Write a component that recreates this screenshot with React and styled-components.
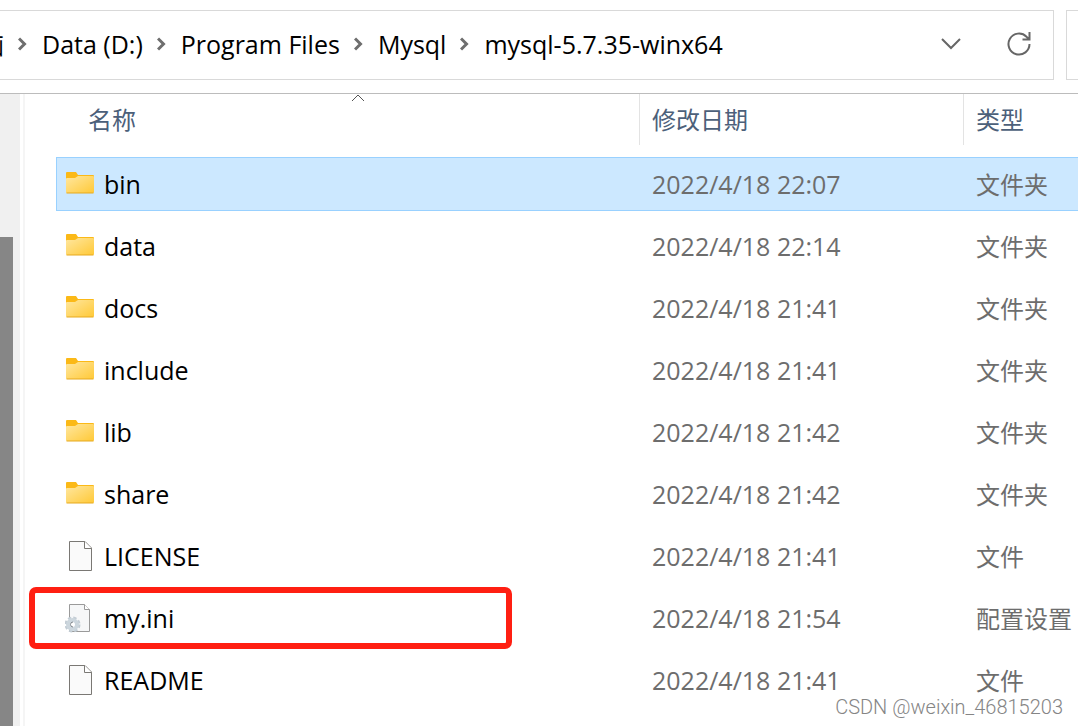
import React from 'react';
import styled, { createGlobalStyle } from 'styled-components';

const files = [
  { name: 'bin', kind: 'folder', date: '2022/4/18 22:07', type: '文件夹', selected: true },
  { name: 'data', kind: 'folder', date: '2022/4/18 22:14', type: '文件夹' },
  { name: 'docs', kind: 'folder', date: '2022/4/18 21:41', type: '文件夹' },
  { name: 'include', kind: 'folder', date: '2022/4/18 21:41', type: '文件夹' },
  { name: 'lib', kind: 'folder', date: '2022/4/18 21:42', type: '文件夹' },
  { name: 'share', kind: 'folder', date: '2022/4/18 21:42', type: '文件夹' },
  { name: 'LICENSE', kind: 'file', date: '2022/4/18 21:41', type: '文件' },
  { name: 'my.ini', kind: 'config', date: '2022/4/18 21:54', type: '配置设置', marked: true },
  { name: 'README', kind: 'file', date: '2022/4/18 21:41', type: '文件' },
];

const path = ['Data (D:)', 'Program Files', 'Mysql', 'mysql-5.7.35-winx64'];

const FolderIcon = () => (
  <svg width="30" height="32" viewBox="0 1 30 32" aria-hidden="true">
    <defs>
      <linearGradient id="folder" x1="0" y1="0" x2="1" y2="1">
        <stop offset="0" stopColor="#ffe7a0" />
        <stop offset="1" stopColor="#ffc937" />
      </linearGradient>
    </defs>
    <path d="M1 6a1 1 0 0 1 1-1h9l2 3h15a1 1 0 0 1 1 1v4H1z" fill="#fbb917" />
    <path
      d="M1 12a1 1 0 0 1 1-1h8l3-2h15a1 1 0 0 1 1 1v15a1 1 0 0 1-1 1H2a1 1 0 0 1-1-1z"
      fill="url(#folder)"
    />
    <path d="M1.500 26h27" fill="none" stroke="#e6a91f" />
  </svg>
);

const FileIcon = () => (
  <svg width="30" height="32" viewBox="0 0 30 32" aria-hidden="true">
    <path d="M4.500 1.500H20l6.500 6.500v22.500h-22z" fill="#fafafa" stroke="#7a7874" />
    <path d="M19.500 1.500V8.500h7" fill="#fff" stroke="#7a7874" />
  </svg>
);

const ConfigIcon = () => (
  <svg width="30" height="32" viewBox="0 0 30 32" aria-hidden="true">
    <path d="M4.500 2.500h15l5 5v22h-20z" fill="#f6f7f8" stroke="#9a9a9a" />
    <path d="M19.500 2.500v5h5" fill="#fff" stroke="#9a9a9a" />
    <circle cx="7.500" cy="22.500" r="6.500" fill="none" stroke="#c2ccd4" strokeWidth="3" strokeDasharray="3.100 2" />
    <circle cx="7.500" cy="22.500" r="4.500" fill="#fff" stroke="#ccd6dd" strokeWidth="4" />
    <path d="M8 20a2.500 2.500 0 0 0 0 5" fill="none" stroke="#7f868c" />
  </svg>
);

const icons = { folder: FolderIcon, file: FileIcon, config: ConfigIcon };

const Separator = () => (
  <svg width="10" height="14" viewBox="0 0 10 14" aria-hidden="true">
    <path d="M1 1.500L6.500 7 1 12.500" fill="none" stroke="#6e6e6e" strokeWidth="3" />
  </svg>
);

const FileRow = ({ file }) => {
  const Icon = icons[file.kind];
  return (
    <Row $selected={file.selected}>
      <NameCell>
        <FileName>
          <Icon />
          {file.name}
        </FileName>
        {file.marked && <Marker />}
      </NameCell>
      <Cell>{file.date}</Cell>
      <TypeCell>{file.type}</TypeCell>
    </Row>
  );
};

const App = () => (
  <>
    <GlobalStyle />
    <Window>
      <Toolbar>
        <AddressBar>
          <Path aria-label="路径">
            <Clipped>
              <Crumb href="#">此电脑</Crumb>
            </Clipped>
            {path.map((part) => (
              <React.Fragment key={part}>
                <Separator />
                <Crumb href="#">{part}</Crumb>
              </React.Fragment>
            ))}
          </Path>
          <IconButton aria-label="历史记录">
            <svg width="22" height="14" viewBox="0 0 22 14">
              <path d="M2 2l9 9 9-9" fill="none" stroke="#666" strokeWidth="2" />
            </svg>
          </IconButton>
          <IconButton aria-label="刷新">
            <svg width="26" height="26" viewBox="0 0 26 26">
              <path
                d="M23.500 13a10.500 10.500 0 1 1-3-7.300L23 8M23.500 1v7.500h-7"
                fill="none"
                stroke="#666"
                strokeWidth="2"
              />
            </svg>
          </IconButton>
        </AddressBar>
        <SearchBox aria-label="搜索" />
      </Toolbar>
      <Body>
        <Sidebar>
          <Thumb />
        </Sidebar>
        <Divider />
        <Main>
          <Table>
            <colgroup>
              <col />
              <DateCol />
              <TypeCol />
            </colgroup>
            <thead>
              <tr>
                <Heading $first>
                  名称
                  <SortMark width="14" height="8" viewBox="0 0 14 8" aria-hidden="true">
                    <path d="M1 7l6-6 6 6" fill="none" stroke="#555" />
                  </SortMark>
                </Heading>
                <Heading>修改日期</Heading>
                <Heading $last>类型</Heading>
              </tr>
            </thead>
            <tbody>
              {files.map((file) => (
                <FileRow key={file.name} file={file} />
              ))}
            </tbody>
          </Table>
        </Main>
      </Body>
      <Watermark>CSDN @weixin_46815203</Watermark>
    </Window>
  </>
);

export default App;

const GlobalStyle = createGlobalStyle`
  * {
    box-sizing: border-box;
  }

  body {
    margin: 0;
    background: #fff;
    color: #000;
    font-family: 'Open Sans', 'Noto Sans CJK SC', sans-serif;
    font-size: 25px;
    line-height: 32px;
  }
`;

const Window = styled.div`
  position: relative;
  display: flex;
  flex-direction: column;
  min-height: 100vh;
  overflow: hidden;
`;

const Toolbar = styled.header`
  display: flex;
  gap: 12px;
  padding: 10px 0 13px;
  border-bottom: 1px solid #bcbcbc;
`;

const AddressBar = styled.div`
  display: flex;
  flex: 1;
  align-items: center;
  gap: 44px;
  height: 70px;
  padding: 0 21px 3px 0;
  border: 1px solid #d9d9d9;
  border-left: 0;
`;

const Path = styled.nav`
  display: flex;
  flex: 1;
  align-items: center;
  gap: 14px;
  white-space: nowrap;
`;

// only the end of the first crumb is in view
const Clipped = styled.span`
  display: flex;
  justify-content: flex-end;
  width: 4px;
  overflow: hidden;
`;

const Crumb = styled.a`
  color: inherit;
  text-decoration: none;
`;

const IconButton = styled.button`
  display: flex;
  padding: 0;
  border: 0;
  background: none;
`;

const SearchBox = styled.input`
  width: 12px;
  height: 70px;
  padding: 0;
  border: 1px solid #d9d9d9;
  border-right: 0;
  background: #fff;
`;

const Body = styled.div`
  display: flex;
  flex: 1;
`;

const Sidebar = styled.div`
  width: 20px;
  padding-top: 143px;
  background: #f0f0f0;
`;

const Thumb = styled.div`
  width: 13px;
  height: 100%;
  background: #868686;
`;

const Divider = styled.div`
  width: 5px;
  border-right: 2px solid #f5f5f5;
`;

const Main = styled.main`
  flex: 1;
  padding-left: 31px;
`;

const Table = styled.table`
  width: 100%;
  table-layout: fixed;
  border-collapse: separate;
  border-spacing: 0 8px;
  margin-top: -8px;
`;

const DateCol = styled.col`
  width: 324px;
`;

const TypeCol = styled.col`
  width: 114px;
`;

const Heading = styled.th`
  position: relative;
  height: 55px;
  padding: 0 0 4px ${(props) => (props.$first ? '32px' : '12px')};
  color: #4c607a;
  font-size: 24px;
  font-weight: 400;
  text-align: left;
  background: ${(props) =>
    props.$last ? 'none' : 'linear-gradient(#e3e3e3, #e3e3e3) right top / 1px 51px no-repeat'};
`;

// sits on the top edge of the sorted column
const SortMark = styled.svg`
  position: absolute;
  top: 0;
  right: 0;
  left: 20px;
  margin: 0 auto;
`;

const Cell = styled.td`
  height: 54px;
  padding: 0 0 0 12px;
  color: #6d6d6d;
  border: 0 solid transparent;
  border-width: 1px 0;
  white-space: nowrap;
`;

const TypeCell = styled(Cell)`
  padding-top: 2px;
  font-size: 24px;
`;

const NameCell = styled(Cell)`
  position: relative;
  padding-left: 8px;
  border-left-width: 1px;
  color: #000;
`;

const Row = styled.tr`
  background: ${(props) => (props.$selected ? '#cce8ff' : 'none')};

  ${Cell} {
    border-color: ${(props) => (props.$selected ? '#99d1ff' : 'transparent')};
  }
`;

const FileName = styled.div`
  display: flex;
  align-items: center;
  gap: 9px;
`;

// red frame drawn round a file name
const Marker = styled.div`
  position: absolute;
  top: -5px;
  bottom: -5px;
  left: -28px;
  width: 483px;
  border: 6px solid #ff1f12;
  border-radius: 7px;
`;

const Watermark = styled.div`
  position: absolute;
  right: 15px;
  bottom: 7px;
  color: #858585;
  font-family: Roboto, 'Liberation Sans', sans-serif;
  font-size: 20px;
  font-weight: 300;
  line-height: 24px;
  text-shadow: 1px 1px 0 #fff;
`;
